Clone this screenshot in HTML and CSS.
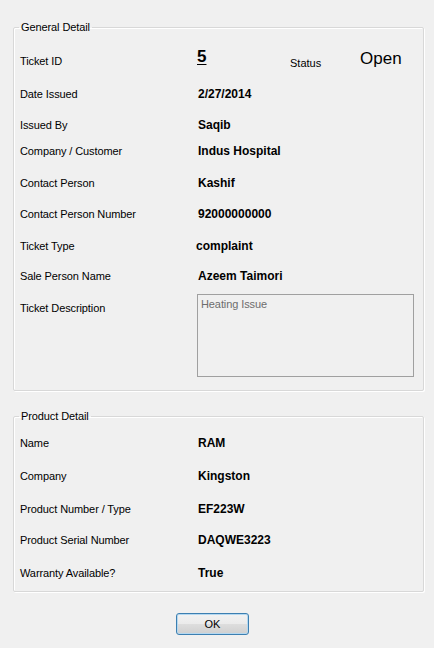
FILE: index.html
```html
<!DOCTYPE html>
<html>
<head>
<meta charset="utf-8">
<link rel="stylesheet" href="styles.css">
</head>
<body>
<div class="window">
  <fieldset class="group general">
    <legend>General Detail</legend>
    <div class="rows">
      <div class="row h33 first">
        <span class="label">Ticket ID</span>
        <div class="idline">
          <span class="id">5</span>
          <span class="status-label">Status</span>
          <span class="status">Open</span>
        </div>
      </div>
      <div class="row h31"><span class="label">Date Issued</span><span class="value">2/27/2014</span></div>
      <div class="row h26"><span class="label">Issued By</span><span class="value">Saqib</span></div>
      <div class="row h32"><span class="label">Company / Customer</span><span class="value">Indus Hospital</span></div>
      <div class="row h31"><span class="label">Contact Person</span><span class="value">Kashif</span></div>
      <div class="row h32"><span class="label">Contact Person Number</span><span class="value">92000000000</span></div>
      <div class="row h30"><span class="label">Ticket Type</span><span class="value shift">complaint</span></div>
      <div class="row h25"><span class="label">Sale Person Name</span><span class="value">Azeem Taimori</span></div>
      <div class="row desc">
        <span class="label">Ticket Description</span>
        <div class="textbox">Heating Issue</div>
      </div>
    </div>
  </fieldset>

  <fieldset class="group product">
    <legend>Product Detail</legend>
    <div class="rows">
      <div class="row h33"><span class="label">Name</span><span class="value">RAM</span></div>
      <div class="row h33"><span class="label">Company</span><span class="value">Kingston</span></div>
      <div class="row h31"><span class="label">Product Number / Type</span><span class="value">EF223W</span></div>
      <div class="row h33"><span class="label">Product Serial Number</span><span class="value">DAQWE3223</span></div>
      <div class="row last"><span class="label">Warranty Available?</span><span class="value">True</span></div>
    </div>
  </fieldset>

  <div class="actions">
    <button class="ok" type="button">OK</button>
  </div>
</div>
</body>
</html>
```

FILE: styles.css
```css
html, body {
  margin: 0;
  padding: 0;
  background: #f0f0f0;
}

body {
  font-family: "Liberation Sans", Arial, sans-serif;
  font-size: 11px;
  color: #000;
}

.window {
  width: 434px;
  height: 648px;
  box-sizing: border-box;
  padding: 20px 0 0 13px;
}

.group {
  width: 411px;
  box-sizing: border-box;
  margin: 0;
  border: 1px solid #d8d8d8;
  border-radius: 2px;
  box-shadow: inset 1px 1px 0 #ffffff, 1px 1px 0 #ffffff;
  padding: 0 6px;
}

.group legend {
  padding: 0 2px;
  margin-left: -1px;
  font-size: 11px;
  line-height: 14px;
  letter-spacing: -0.1px;
}

.general {
  padding-top: 20px;
  padding-bottom: 13px;
}

.product {
  margin-top: 18px;
  padding-top: 13px;
  padding-bottom: 11px;
}

.rows {
  display: flex;
  flex-direction: column;
}

.row {
  display: grid;
  grid-template-columns: 178px 1fr;
  align-items: start;
}

.h25 { height: 25px; }
.h26 { height: 26px; }
.h30 { height: 30px; }
.h31 { height: 31px; }
.h32 { height: 32px; }
.h33 { height: 33px; }
.last { height: 14px; }

.label {
  line-height: 14px;
  letter-spacing: -0.1px;
}

.value {
  font-weight: bold;
  font-size: 12px;
  line-height: 14px;
}

.value.shift {
  margin-left: -2px;
}

.idline {
  display: flex;
  align-items: flex-start;
}

.id {
  font-weight: bold;
  font-size: 17px;
  line-height: 18px;
  margin-left: -1px;
  margin-top: -6px;
  text-decoration: underline;
  text-underline-offset: 2px;
  text-decoration-thickness: 1px;
  width: 93px;
}

.status-label {
  line-height: 14px;
  margin-top: 2px;
  width: 70px;
}

.status {
  font-size: 17px;
  line-height: 18px;
  margin-top: -4px;
}

.desc .label {
  padding-top: 7px;
}

.textbox {
  margin-left: -1px;
  width: 217px;
  height: 83px;
  box-sizing: border-box;
  border: 1px solid #a0a0a0;
  background: #f0f0f0;
  color: #6d6d6d;
  padding: 2px 3px;
  line-height: 14px;
  letter-spacing: -0.1px;
}

.actions {
  padding-top: 21px;
  padding-left: 163px;
}

.ok {
  width: 73px;
  height: 22px;
  box-sizing: border-box;
  border: 1px solid #3c7fb1;
  border-radius: 3px;
  background: linear-gradient(#f2f2f2 0%, #ebebeb 48%, #dddddd 52%, #cfcfcf 100%);
  box-shadow: inset 0 0 0 1px #b5d8f0;
  font-family: "Liberation Sans", Arial, sans-serif;
  font-size: 11px;
  color: #000;
  padding: 0;
  margin: 0;
}
```
